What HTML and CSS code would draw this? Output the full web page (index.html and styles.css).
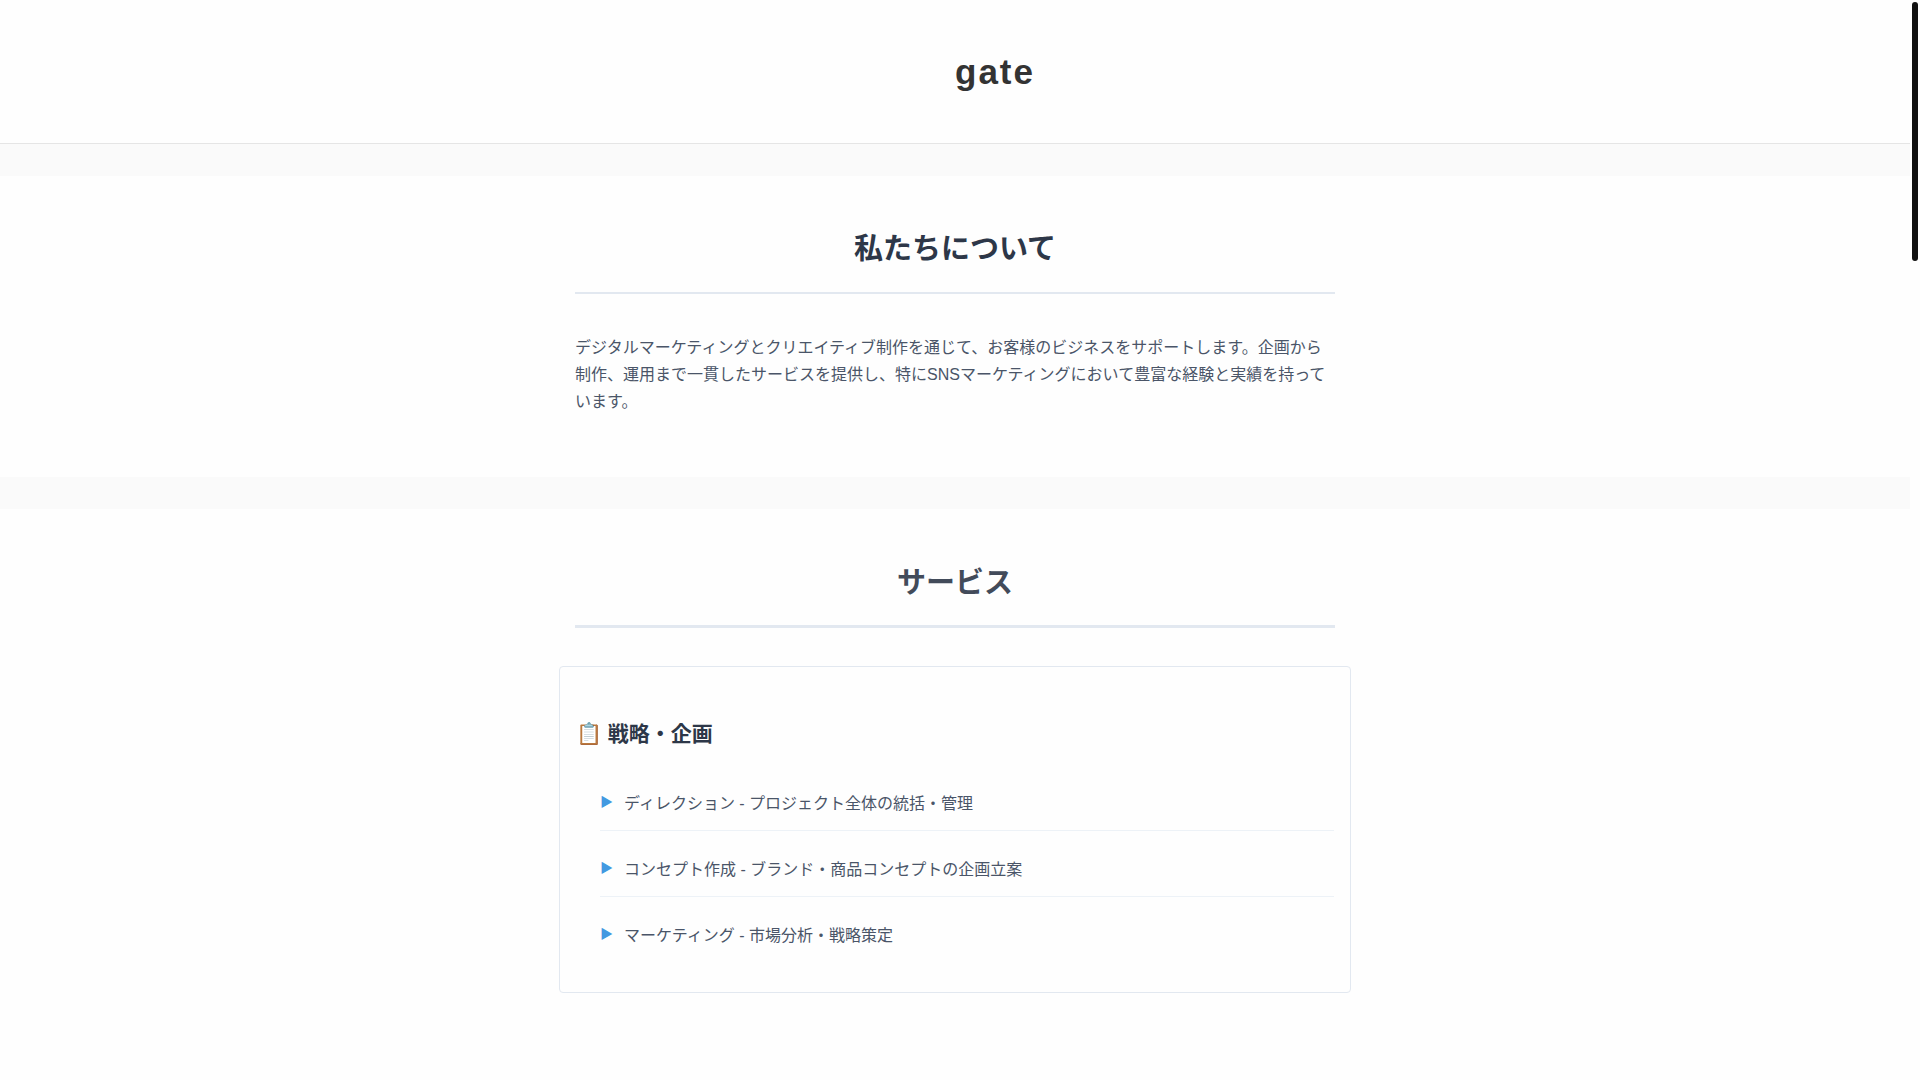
FILE: index.html
```html
<!DOCTYPE html>
<html lang="ja">
<head>
<meta charset="UTF-8">
<meta name="viewport" content="width=device-width, initial-scale=1">
<title>gate</title>
<link rel="stylesheet" href="styles.css">
</head>
<body>

<header class="header">
  <h1 class="logo">gate</h1>
</header>

<main>
  <section class="section" id="about">
    <div class="container">
      <h2>私たちについて</h2>
      <p>デジタルマーケティングとクリエイティブ制作を通じて、お客様のビジネスをサポートします。企画から制作、運用まで一貫したサービスを提供し、特にSNSマーケティングにおいて豊富な経験と実績を持っています。</p>
    </div>
  </section>

  <section class="section services" id="services">
    <div class="container">
      <h2>サービス</h2>
      <div class="card">
        <h3>📋 戦略・企画</h3>
        <ul class="service-list">
          <li>ディレクション - プロジェクト全体の統括・管理</li>
          <li>コンセプト作成 - ブランド・商品コンセプトの企画立案</li>
          <li>マーケティング - 市場分析・戦略策定</li>
        </ul>
      </div>
    </div>
  </section>
</main>

<div class="scrollbar"></div>

</body>
</html>
```
FILE: styles.css
```css
* {
  box-sizing: border-box;
  margin: 0;
  padding: 0;
}

body {
  display: flex;
  flex-direction: column;
  min-height: 100vh;
  padding-right: 10px;
  font-family: "Liberation Sans", "Noto Sans CJK JP", sans-serif;
  font-size: 16px;
  line-height: 27px;
  color: #333;
  background-color: #fefefe;
}

.header {
  padding: 40px 0;
  background-color: #fefefe;
  border-bottom: 1px solid #e5e5e5;
}

/* the name starts at the middle of the page */
.logo {
  padding-left: 50%;
  font-size: 35px;
  line-height: 63px;
  letter-spacing: 2px;
}

main {
  display: flex;
  flex-direction: column;
  flex: 1;
  gap: 32px;
  padding-top: 32px;
  background-color: #fafafa;
}

.section {
  padding: 48px 20px 62px;
  background-color: #fefefe;
}

.container {
  max-width: 760px;
  margin: 0 auto;
}

h2 {
  margin-bottom: 40px;
  padding-bottom: 18px;
  font-size: 29px;
  line-height: 50px;
  text-align: center;
  color: #2d3748;
  border-bottom: 2px solid #e2e8f0;
}

p {
  color: #4a5568;
}

.services {
  flex: 1;
}

.services h2 {
  margin-bottom: 38px;
  padding-bottom: 16px;
  line-height: 52px;
  color: #424b5a;
  border-bottom-width: 3px;
}

.card {
  margin: 0 -16px;
  padding: 48px 16px 30px;
  border: 1px solid #e2e8f0;
  border-radius: 4px;
}

h3 {
  margin-bottom: 26px;
  font-size: 21px;
  line-height: 37px;
  color: #2d3748;
}

.service-list {
  padding-left: 24px;
  list-style: none;
}

.service-list li {
  position: relative;
  margin-bottom: 13px;
  padding: 12px 0 13px 24px;
  color: #4a5568;
  border-bottom: 1px solid #edf2f7;
}

.service-list li:last-child {
  margin-bottom: 0;
  border-bottom: none;
}

.service-list li::before {
  content: "▶";
  position: absolute;
  top: 10px;
  left: 0;
  font-size: 13px;
  color: #4299e1;
}

/* page scroll thumb */
.scrollbar {
  position: fixed;
  top: 2px;
  right: 2px;
  width: 6px;
  height: 24vh;
  border-radius: 3px;
  background-color: #111;
}
```
